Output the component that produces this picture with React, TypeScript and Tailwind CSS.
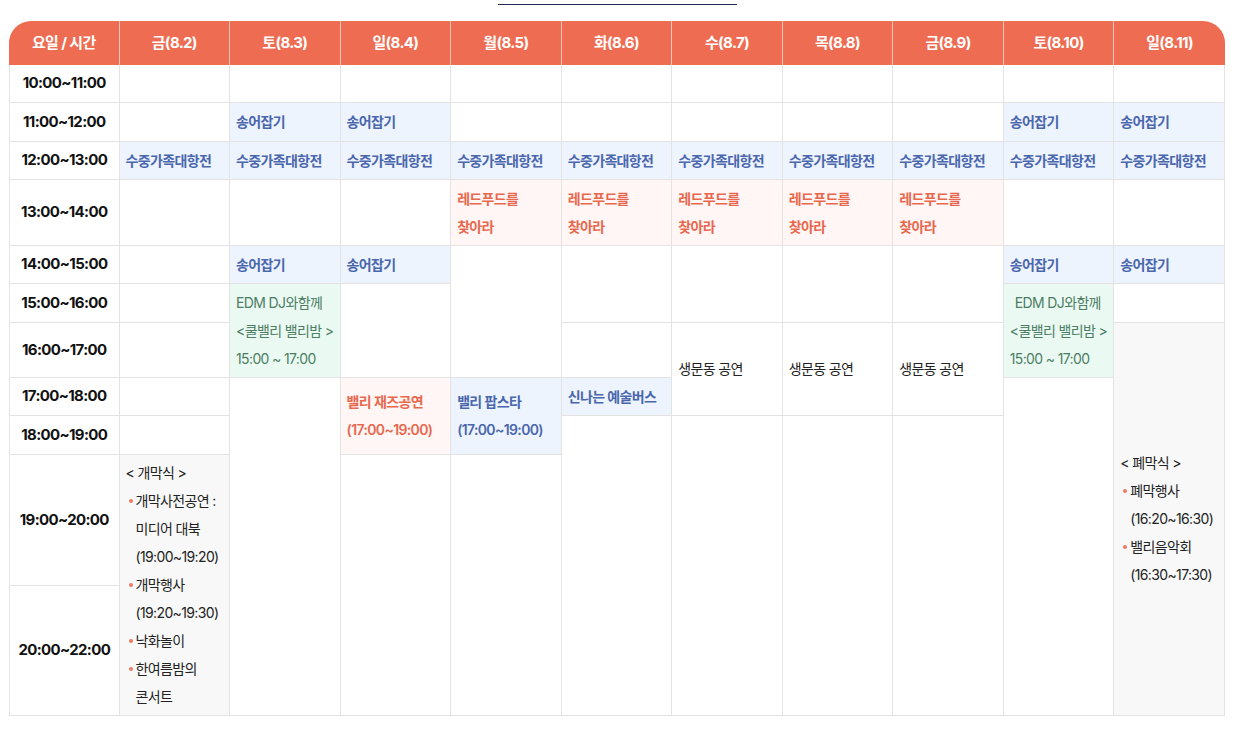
import type { ReactNode } from "react";

type Kind = "blue" | "red" | "green" | "gray" | "plain";

interface Cell {
  span?: number;
  kind?: Kind;
  body?: ReactNode;
}

interface Row {
  time: string;
  h: string;
  cells: Cell[];
}

const days = [
  "금(8.2)",
  "토(8.3)",
  "일(8.4)",
  "월(8.5)",
  "화(8.6)",
  "수(8.7)",
  "목(8.8)",
  "금(8.9)",
  "토(8.10)",
  "일(8.11)",
];

const kindClass: Record<Kind, string> = {
  blue: "bg-[#eef4fd] text-[#4a67ad] font-semibold",
  red: "bg-[#fff6f5] text-[#e8684e] font-semibold",
  green: "bg-[#eafaf3] text-[#4d7d63]",
  gray: "bg-[#f8f8f8] text-[#222]",
  plain: "bg-white text-[#222]",
};

const E: Cell = {};
const span = (n: number): Cell => ({ span: n });
const fishing: Cell = { kind: "blue", body: "송어잡기" };
const water: Cell = { kind: "blue", body: "수중가족대항전" };
const redFood: Cell = {
  kind: "red",
  body: (
    <>
      레드푸드를
      <br />
      찾아라
    </>
  ),
};
const edm = (indent: boolean): Cell => ({
  span: 2,
  kind: "green",
  body: (
    <>
      <span className={indent ? "pl-[5px]" : ""}>EDM DJ와함께</span>
      <br />
      &lt;쿨밸리 밸리밤 &gt;
      <br />
      15:00 ~ 17:00
    </>
  ),
});
const show: Cell = { span: 2, kind: "plain", body: "생문동 공연" };

// small coral dot, then text hanging from the same left edge
const Bullet = ({ children }: { children: ReactNode }) => (
  <div className="flex">
    <span className="flex h-[28px] w-[10px] shrink-0 items-center pl-[3px]">
      <span className="h-[4px] w-[4px] rounded-full bg-[#ef7a61]" />
    </span>
    <div>{children}</div>
  </div>
);

const opening: Cell = {
  span: 2,
  kind: "gray",
  body: (
    <div>
      <div>&lt; 개막식 &gt;</div>
      <Bullet>
        개막사전공연 :<br />
        미디어 대북
        <br />
        (19:00~19:20)
      </Bullet>
      <Bullet>
        개막행사
        <br />
        (19:20~19:30)
      </Bullet>
      <Bullet>낙화놀이</Bullet>
      <Bullet>
        한여름밤의
        <br />
        콘서트
      </Bullet>
    </div>
  ),
};

const closing: Cell = {
  span: 5,
  kind: "gray",
  body: (
    <div>
      <div>&lt; 폐막식 &gt;</div>
      <Bullet>
        폐막행사
        <br />
        (16:20~16:30)
      </Bullet>
      <Bullet>
        밸리음악회
        <br />
        (16:30~17:30)
      </Bullet>
    </div>
  ),
};

const rows: Row[] = [
  { time: "10:00~11:00", h: "h-[38px]", cells: [E, E, E, E, E, E, E, E, E, E] },
  {
    time: "11:00~12:00",
    h: "h-[39px]",
    cells: [E, fishing, fishing, E, E, E, E, E, fishing, fishing],
  },
  {
    time: "12:00~13:00",
    h: "h-[38px]",
    cells: [water, water, water, water, water, water, water, water, water, water],
  },
  {
    time: "13:00~14:00",
    h: "h-[66px]",
    cells: [E, E, E, redFood, redFood, redFood, redFood, redFood, E, E],
  },
  {
    time: "14:00~15:00",
    h: "h-[38px]",
    cells: [E, fishing, fishing, span(3), span(2), span(2), span(2), span(2), fishing, fishing],
  },
  {
    time: "15:00~16:00",
    h: "h-[39px]",
    cells: [E, edm(false), span(2), edm(true), E],
  },
  {
    time: "16:00~17:00",
    h: "h-[55px]",
    cells: [E, E, show, show, show, closing],
  },
  {
    time: "17:00~18:00",
    h: "h-[38px]",
    cells: [
      E,
      span(4),
      {
        span: 2,
        kind: "red",
        body: (
          <>
            밸리 재즈공연
            <br />
            (17:00~19:00)
          </>
        ),
      },
      {
        span: 2,
        kind: "blue",
        body: (
          <>
            밸리 팝스타
            <br />
            (17:00~19:00)
          </>
        ),
      },
      { kind: "blue", body: "신나는 예술버스" },
      span(4),
    ],
  },
  {
    time: "18:00~19:00",
    h: "h-[39px]",
    cells: [E, span(3), span(3), span(3), span(3)],
  },
  {
    time: "19:00~20:00",
    h: "h-[130px]",
    cells: [opening, span(2), span(2)],
  },
  { time: "20:00~22:00", h: "h-[130px]", cells: [] },
];

export default function App() {
  return (
    <div className="w-[1234px] h-[730px] bg-white font-[Inter,'Noto_Sans_CJK_KR',sans-serif] tracking-[-0.04em]">
      <div className="pt-[4px]">
        <div className="mx-auto h-px w-[239px] bg-[#1e2a4f]" />
      </div>
      <table className="mt-[16px] ml-[9px] w-[1216px] table-fixed border-separate border-spacing-0">
        <thead>
          <tr className="h-[44px]">
            <th className="rounded-tl-[22px] border-r border-[#f9c3b6] bg-[#ee6d52] text-[15px] font-bold text-white">
              요일 / 시간
            </th>
            {days.map((d, i) => (
              <th
                key={d}
                className={
                  i === days.length - 1
                    ? "rounded-tr-[22px] bg-[#ee6d52] text-[15px] font-bold text-white"
                    : "border-r border-[#f9c3b6] bg-[#ee6d52] text-[15px] font-bold text-white"
                }
              >
                {d}
              </th>
            ))}
          </tr>
        </thead>
        <tbody>
          {rows.map((r) => (
            <tr key={r.time} className={r.h}>
              <td className="border-l border-r border-b border-[#e3e3e3] text-center align-middle text-[15px] font-bold text-[#111]">
                {r.time}
              </td>
              {r.cells.map((c, i) => (
                <td
                  key={i}
                  rowSpan={c.span ?? 1}
                  className={`border-r border-b border-[#e3e3e3] px-[6px] py-[4px] align-middle text-left text-[14px] leading-[28px] ${kindClass[c.kind ?? "plain"]}`}
                >
                  {c.body}
                </td>
              ))}
            </tr>
          ))}
        </tbody>
      </table>
    </div>
  );
}
